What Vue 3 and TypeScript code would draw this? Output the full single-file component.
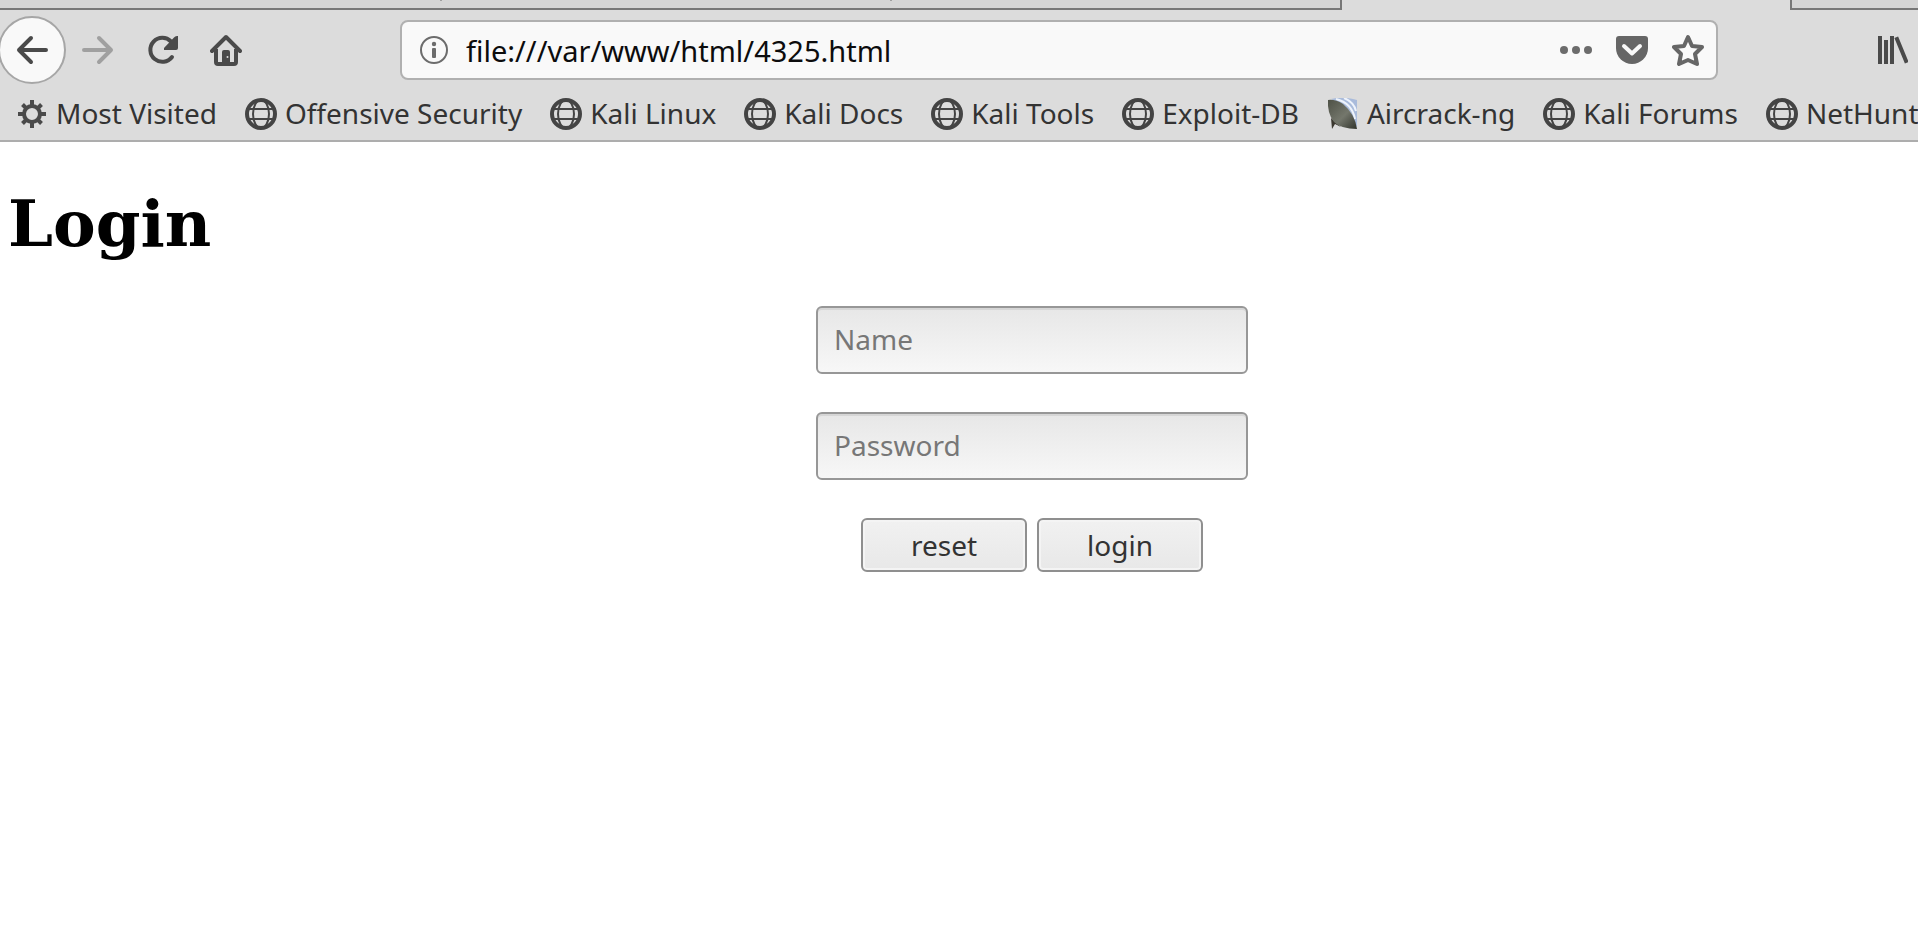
<script setup lang="ts">
import { ref } from 'vue'

interface Bookmark {
  label: string
  icon: 'gear' | 'globe' | 'dish'
}

const bookmarks: Bookmark[] = [
  { label: 'Most Visited', icon: 'gear' },
  { label: 'Offensive Security', icon: 'globe' },
  { label: 'Kali Linux', icon: 'globe' },
  { label: 'Kali Docs', icon: 'globe' },
  { label: 'Kali Tools', icon: 'globe' },
  { label: 'Exploit-DB', icon: 'globe' },
  { label: 'Aircrack-ng', icon: 'dish' },
  { label: 'Kali Forums', icon: 'globe' },
  { label: 'NetHunter', icon: 'globe' },
]

const address = ref('file:///var/www/html/4325.html')
const name = ref('')
const password = ref('')
</script>

<template>
  <div class="window">
    <header class="chrome">
      <div class="tabs">
        <div class="tab tab-left">
          <i class="separator"></i>
          <i class="separator"></i>
        </div>
        <div class="tab-active"></div>
        <div class="tab tab-right"></div>
      </div>

      <div class="toolbar">
        <nav class="nav" aria-label="Navigation">
          <button type="button" class="tool back" aria-label="Back">
            <svg class="icon" viewBox="0 0 32 32">
              <path d="M30 16H3M15 4L3 16l12 12" fill="none" stroke="#4a4a4a" stroke-width="4" stroke-linejoin="round" stroke-linecap="round" />
            </svg>
          </button>
          <button type="button" class="tool" aria-label="Forward" disabled>
            <svg class="icon" viewBox="0 0 32 32">
              <path d="M2 16h27M17 4l12 12-12 12" fill="none" stroke="#a0a0a0" stroke-width="4" stroke-linejoin="round" stroke-linecap="round" />
            </svg>
          </button>
          <button type="button" class="tool" aria-label="Reload">
            <svg class="icon" viewBox="0 0 32 32">
              <path d="M25 7.500A12 12 0 1 0 26 23" fill="none" stroke="#4a4a4a" stroke-width="4" stroke-linecap="round" />
              <path d="M28 3.500q1-1.500 3-1.500h1v12q0 2-2 2H18v-2z" fill="#4a4a4a" />
            </svg>
          </button>
          <button type="button" class="tool" aria-label="Home">
            <svg class="icon" viewBox="0 0 32 32">
              <path d="M2 17L16 3l14 14" fill="none" stroke="#4a4a4a" stroke-width="4" stroke-linejoin="round" stroke-linecap="round" />
              <path d="M6 15v13q0 2 2 2h16q2 0 2-2V15" fill="none" stroke="#4a4a4a" stroke-width="4" />
              <path d="M12 30V18q0-2 2-2h4q2 0 2 2v12z" fill="#4a4a4a" />
              <circle cx="17.500" cy="23" r="1" fill="#dcdcdc" />
            </svg>
          </button>
        </nav>

        <div class="urlbar">
          <svg class="icon" viewBox="0 0 32 32" aria-hidden="true">
            <circle cx="16" cy="16" r="13" fill="none" stroke="#6c6c6c" stroke-width="2" />
            <circle cx="16" cy="10" r="2.200" fill="#6c6c6c" />
            <rect x="14" y="14" width="4" height="10" rx="1" fill="#6c6c6c" />
          </svg>
          <input v-model="address" class="address" type="text" aria-label="Address" spellcheck="false" />
          <div class="actions">
            <button type="button" class="action" aria-label="Page actions">
              <svg class="icon" viewBox="0 0 32 32">
                <g fill="#6c6c6c">
                  <circle cx="4" cy="16" r="4" />
                  <circle cx="16" cy="16" r="4" />
                  <circle cx="28" cy="16" r="4" />
                </g>
              </svg>
            </button>
            <button type="button" class="action" aria-label="Save to Pocket">
              <svg class="icon" viewBox="0 0 32 32">
                <path d="M3 2h26q3 0 3 3v9a16 16 0 0 1-32 0V5q0-3 3-3z" fill="#666" />
                <path d="M8 12l8 7.500 8-7.500" fill="none" stroke="#f9f9f9" stroke-width="4" stroke-linecap="round" stroke-linejoin="round" />
              </svg>
            </button>
            <button type="button" class="action" aria-label="Bookmark this page">
              <svg class="icon" viewBox="0 0 32 32">
                <path d="M16 3l4 9 10 1-7 7 2 10-9-4-9 4 2-10-7-7 10-1z" fill="none" stroke="#666" stroke-width="4" stroke-linejoin="round" />
              </svg>
            </button>
          </div>
        </div>

        <button type="button" class="library" aria-label="Library">
          <svg class="icon" viewBox="0 0 32 32">
            <path d="M4 4v24M10 8v20M16 4v24M21 5l9 22" fill="none" stroke="#4a4a4a" stroke-width="4" stroke-linecap="square" />
          </svg>
        </button>
      </div>

      <nav class="bookmarks" aria-label="Bookmarks">
        <a v-for="item in bookmarks" :key="item.label" class="bookmark" href="#">
          <svg v-if="item.icon === 'gear'" class="icon" viewBox="0 0 32 32" aria-hidden="true">
            <g fill="none" stroke="#4a4a4a">
              <circle cx="16" cy="16" r="8" stroke-width="4" />
              <path d="M16 2v5M16 25v5M2 16h5M25 16h5M6.500 6.500L10 10M22 22l3.500 3.500M25.500 6.500L22 10M10 22l-3.500 3.500" stroke-width="4" />
            </g>
          </svg>
          <svg v-else-if="item.icon === 'globe'" class="icon" viewBox="0 0 32 32" aria-hidden="true">
            <g fill="none" stroke="#444">
              <circle cx="16" cy="16" r="14" stroke-width="4" />
              <ellipse cx="16" cy="16" rx="8" ry="14" stroke-width="2" />
              <path d="M3 11h26M3 21h26" stroke-width="2" />
            </g>
          </svg>
          <svg v-else class="icon" viewBox="0 0 32 32" aria-hidden="true">
            <defs>
              <linearGradient id="dish-face" x1="0" y1="0" x2="1" y2="1">
                <stop offset="0" stop-color="#4e5146" />
                <stop offset="0.550" stop-color="#74776c" />
                <stop offset="1" stop-color="#30332b" />
              </linearGradient>
            </defs>
            <path d="M4 1Q16-2 30 2v28Q24 10 4 1z" fill="#a9bbdb" />
            <path d="M9 1q16 4 19 20M17 0q10 4 12 13" fill="none" stroke="#eef3fb" stroke-width="2" />
            <path d="M4 20l1 11 3-5 6 3z" fill="#3b3830" />
            <path d="M1 2Q8 1 16 6 28 16 30 31 14 31 7 24 0 15 1 2z" fill="url(#dish-face)" />
          </svg>
          <span class="label">{{ item.label }}</span>
        </a>
      </nav>
    </header>

    <main class="page">
      <h1>Login</h1>
      <form class="login" @submit.prevent>
        <input v-model="name" class="field" type="text" placeholder="Name" aria-label="Name" />
        <input v-model="password" class="field" type="password" placeholder="Password" aria-label="Password" />
        <div class="buttons">
          <button type="reset" class="push">reset</button>
          <button type="submit" class="push">login</button>
        </div>
      </form>
    </main>
  </div>
</template>

<style>
body {
  background: #fff;
}
</style>

<style scoped>
.window {
  min-height: 100vh;
  overflow: hidden;
  font-family: "Noto Sans", sans-serif;
  font-size: 28px;
  color: #333;
}

button,
input {
  box-sizing: border-box;
  margin: 0;
  font: inherit;
  color: inherit;
}

.chrome {
  background: #dcdcdc;
  border-bottom: 2px solid #adadad;
}

.tabs {
  display: flex;
  height: 10px;
}

.tab {
  box-sizing: border-box;
  background: #d5d5d5;
  border-bottom: 2px solid #777;
}

.tab-left {
  display: flex;
  flex: 1;
  justify-content: flex-end;
  border-right: 2px solid #777;
}

.separator {
  width: 448px;
  height: 1px;
  border-left: 2px solid #a0a0a0;
}

.tab-active {
  width: 448px;
}

.tab-right {
  width: 128px;
  border-left: 2px solid #777;
}

.toolbar {
  display: flex;
  align-items: center;
  height: 80px;
  padding-right: 10px;
}

.nav {
  display: flex;
  align-items: center;
  margin-left: -2px;
}

.tool,
.action,
.library {
  display: flex;
  align-items: center;
  justify-content: center;
  padding: 0;
  border: 0;
  background: none;
}

.tool {
  width: 64px;
  height: 64px;
}

.back {
  width: 68px;
  height: 68px;
  border: 2px solid #a6a6a6;
  border-radius: 50%;
  background: #f9f9f9;
}

.icon {
  display: block;
  flex: none;
  width: 32px;
  height: 32px;
}

.urlbar {
  box-sizing: border-box;
  display: flex;
  flex: 1;
  align-items: center;
  height: 60px;
  margin: 0 158px 0 142px;
  padding: 0 12px 0 16px;
  border: 2px solid #b0b0b0;
  border-radius: 8px;
  background: #f9f9f9;
}

.address {
  flex: 1;
  min-width: 0;
  margin-left: 16px;
  padding: 0;
  border: 0;
  outline: 0;
  background: none;
  font-size: 29px;
  color: #0c0c0d;
}

.actions {
  display: flex;
  gap: 24px;
}

.bookmarks {
  display: flex;
  gap: 28px;
  height: 48px;
  padding: 0 0 2px 16px;
}

.bookmark {
  display: flex;
  flex: none;
  align-items: center;
  gap: 8px;
  color: #333;
  text-decoration: none;
  white-space: nowrap;
}

.label {
  padding-bottom: 2px;
}

.page {
  padding: 44px 8px 0;
}

h1 {
  margin: 0;
  font-family: "DejaVu Serif", serif;
  font-size: 64px;
  line-height: 76px;
  color: #000;
}

.login {
  display: flex;
  flex-direction: column;
  align-items: center;
  gap: 38px;
  margin-top: 44px;
  padding-left: 146px;
}

.field {
  width: 432px;
  height: 68px;
  padding: 0 16px 2px;
  border: 2px solid #979797;
  border-radius: 6px;
  outline: 0;
  background: linear-gradient(#e7e7e7, #f7f7f7);
  box-shadow: inset 0 2px 0 #d6d6d6;
}

.field::placeholder {
  color: #777;
  opacity: 1;
}

.buttons {
  display: flex;
  gap: 10px;
}

.push {
  height: 54px;
  padding: 0 48px;
  border: 2px solid #8f8f8f;
  border-radius: 6px;
  background: linear-gradient(#f1f1f1, #e8e8e8);
  box-shadow: inset 0 0 0 2px #f4f4f4;
  line-height: 50px;
}
</style>
